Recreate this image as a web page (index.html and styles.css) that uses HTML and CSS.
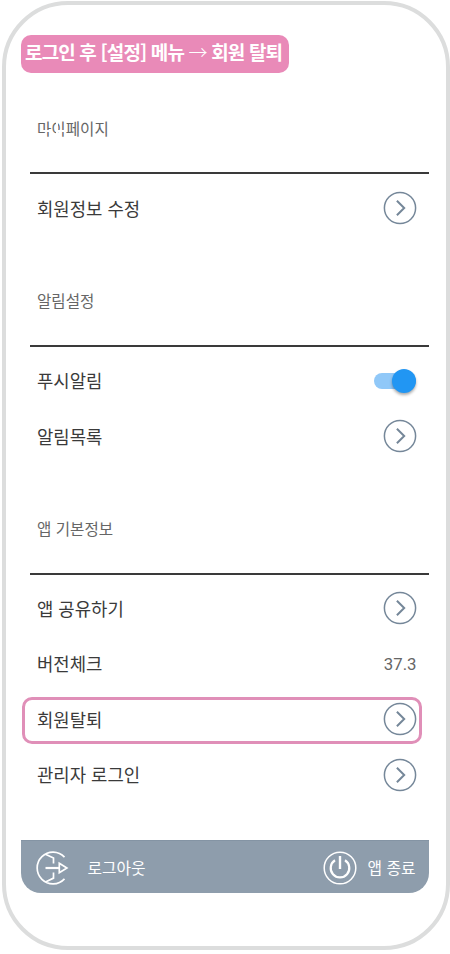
FILE: index.html
```html
<!DOCTYPE html>
<html lang="ko">
<head>
<meta charset="utf-8">
<title>설정</title>
<link rel="stylesheet" href="styles.css">
</head>
<body>
<svg class="defs" width="0" height="0" aria-hidden="true">
  <symbol id="go" viewBox="0 0 34 34"><circle cx="17" cy="17" r="15.6" stroke-width="1.5"/><path d="M13.9 9.7l7.3 7.3-7.3 7.3" stroke-width="2"/></symbol>
</svg>
<main class="phone">
  <h1 class="banner"><span>로그인 후 [설정] 메뉴 <i class="arrow">→</i> 회원 탈퇴</span></h1>
  <section class="group">
    <h2 class="worn"><span>마이페이지</span></h2>
    <ul>
      <li><span>회원정보 수정</span><svg class="go"><use href="#go"/></svg></li>
    </ul>
  </section>
  <section class="group">
    <h2><span>알림설정</span></h2>
    <ul>
      <li><span>푸시알림</span><i class="switch"></i></li>
      <li><span>알림목록</span><svg class="go"><use href="#go"/></svg></li>
    </ul>
  </section>
  <section class="group">
    <h2><span>앱 기본정보</span></h2>
    <ul>
      <li><span>앱 공유하기</span><svg class="go"><use href="#go"/></svg></li>
      <li><span>버전체크</span><span class="version">37.3</span></li>
      <li class="marked"><span>회원탈퇴</span><svg class="go"><use href="#go"/></svg></li>
      <li><span>관리자 로그인</span><svg class="go"><use href="#go"/></svg></li>
    </ul>
  </section>
  <footer class="bar">
    <div class="action logout">
      <svg width="34" height="34" viewBox="0 0 34 34"><path d="M28.5 6.2A15.8 15.8 0 1 0 28.5 27.8M9.5 3.3l8 3.8V12.5M17.5 21.5v5.6l-8 3.8" stroke-width="1.7"/><path d="M9.5 17h14" stroke-width="2.2"/><path d="M23.3 12.2l7.6 4.8-7.6 4.8z" stroke-width="1.7"/></svg>
      <span>로그아웃</span>
    </div>
    <div class="action quit">
      <svg width="34" height="34" viewBox="0 0 34 34"><circle cx="17" cy="17" r="15.8" stroke-width="1.5"/><path d="M17 5v13" stroke-width="2.4"/><path d="M12 9.3A9.3 9.3 0 1 0 22 9.3" stroke-width="2.2"/></svg>
      <span>앱 종료</span>
    </div>
  </footer>
</main>
</body>
</html>
```
FILE: styles.css
```css
*, *::before, *::after { box-sizing: border-box; }
body {
  margin: 0;
  background: #fff;
  color: #3a3a3a;
  font-family: "Noto Sans CJK KR", sans-serif;
}
svg { fill: none; flex: none; }
.defs { display: block; }
.phone {
  display: flex;
  flex-direction: column;
  width: 448px;
  height: 949px;
  margin: 1px 0 0 1.5px;
  padding: 30px 16.5px 53px 15.5px;
  border: 4px solid #dcdddd;
  border-radius: 66px;
}
.banner {
  display: flex;
  align-items: center;
  width: 268px;
  height: 38px;
  margin: 0;
  padding: 0 0 5px 4px;
  border-radius: 10px;
  background: #e98ab8;
  color: #fff;
  font-size: 19px;
  font-weight: 700;
  letter-spacing: -0.85px;
  white-space: nowrap;
}
.arrow { font-style: normal; font-weight: 300; }
.group { margin-left: 8.5px; }
.group h2 {
  display: flex;
  align-items: center;
  height: 101.4px;
  margin: 0;
  padding: 10px 0 0 7.5px;
  border-bottom: 2px solid #3a3a3a;
  color: #666;
  font-size: 15.6px;
  font-weight: 400;
}
.worn span { position: relative; }
/* light scratches across the first two syllables */
.worn span::after {
  content: "";
  position: absolute;
  top: 13px;
  left: 6px;
  width: 22px;
  height: 2px;
  background: linear-gradient(90deg, #fff 7px, #0000 7px 15px, #fff 15px);
}
.worn span::before {
  content: "";
  position: absolute;
  top: 5px;
  left: 19px;
  width: 2px;
  height: 13px;
  background: #fff;
}
.group ul {
  margin: 0;
  padding: 6px 13px 9.5px 7.5px;
  list-style: none;
}
.group li {
  display: flex;
  align-items: center;
  justify-content: space-between;
  position: relative;
  height: 55.5px;
  font-size: 17.8px;
}
.group li > span:first-child { margin-top: -1px; }
.go { width: 34px; height: 34px; margin: 0 -0.8px 0 0; stroke: #758799; }
.group li > .version { margin: 1px -0.5px 0 0; color: #666; font: 16.8px Roboto, sans-serif; }
.marked::before {
  content: "";
  position: absolute;
  top: 5.5px;
  left: -15px;
  width: 400px;
  height: 47px;
  border: 3px solid #e08fb8;
  border-radius: 10px;
}
.switch {
  position: relative;
  width: 42px;
  height: 16px;
  border-radius: 8px;
  background: #90c8f8;
}
.switch::after {
  content: "";
  position: absolute;
  top: -4px;
  right: 0;
  width: 24px;
  height: 24px;
  border-radius: 50%;
  background: #2196f3;
  box-shadow: 0 2px 3px #0005;
}
.bar {
  display: flex;
  align-items: center;
  justify-content: space-between;
  height: 53px;
  margin-top: auto;
  padding: 2px 13.5px 0 14.5px;
  border-top: 1px solid #8494a4;
  border-radius: 0 0 20px 20px;
  background: #8e9dac;
  color: #fff;
  font-size: 15.8px;
}
.bar svg { stroke: #fff; }
.bar span { margin-top: -2px; }
.action { display: flex; align-items: center; }
.logout { gap: 18px; }
.quit { gap: 10px; }
```
